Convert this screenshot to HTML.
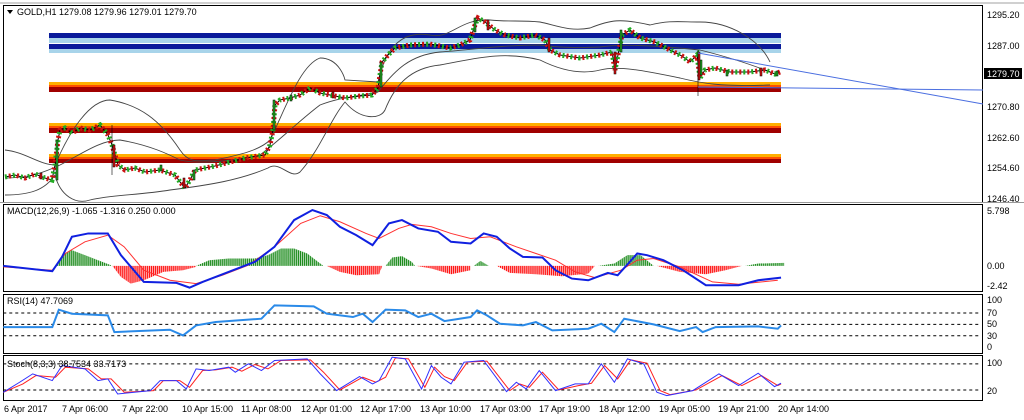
<!DOCTYPE html>
<html><head><meta charset="utf-8"><style>
html,body{margin:0;padding:0;background:#fff;width:1024px;height:420px;overflow:hidden}
svg{display:block;font-family:"Liberation Sans",sans-serif;font-size:9px}
</style></head><body>
<svg width="1024" height="420" viewBox="0 0 1024 420" xmlns="http://www.w3.org/2000/svg">
<defs>
<pattern id="gp" width="3" height="10" patternUnits="userSpaceOnUse"><rect x="0" y="0" width="2" height="10" fill="#1a8a1a"/></pattern>
<pattern id="rp" width="3" height="10" patternUnits="userSpaceOnUse"><rect x="0" y="0" width="2" height="10" fill="#ff1010"/></pattern>
</defs>
<rect width="1024" height="420" fill="#fff"/>
<line x1="0" y1="3" x2="1024" y2="3" stroke="#a0a0a0"/>
<rect x="3.5" y="5.5" width="979" height="197" fill="none" stroke="#000"/>
<rect x="3.5" y="204.5" width="979" height="87" fill="none" stroke="#000"/>
<rect x="3.5" y="294.5" width="979" height="59" fill="none" stroke="#000"/>
<rect x="3.5" y="355.5" width="979" height="45" fill="none" stroke="#000"/>
<line x1="0" y1="202.5" x2="1024" y2="202.5" stroke="#999"/>
<rect x="49" y="33" width="732" height="5" fill="#0a1a9a"/>
<rect x="49" y="38" width="732" height="5" fill="#a8d4ea"/>
<rect x="49" y="44" width="732" height="5" fill="#0a1a9a"/>
<rect x="49" y="49" width="732" height="4" fill="#a8d4ea"/>
<rect x="49" y="82" width="732" height="3" fill="#ffb000"/>
<rect x="49" y="85" width="732" height="2" fill="#ff5000"/>
<rect x="49" y="87" width="732" height="5" fill="#a00000"/>
<rect x="49" y="123" width="732" height="3" fill="#ffb000"/>
<rect x="49" y="126" width="732" height="2" fill="#ff5000"/>
<rect x="49" y="128" width="732" height="5" fill="#a00000"/>
<rect x="49" y="154" width="732" height="3" fill="#ffb000"/>
<rect x="49" y="157" width="732" height="2" fill="#ff5000"/>
<rect x="49" y="159" width="732" height="4" fill="#a00000"/>
<g fill="none" stroke="#444" stroke-width="0.9">
<path d="M5,150 C25,152 40,165 55,165 C70,130 90,100 110,100 C140,105 160,120 180,150 C190,165 200,160 215,160 C240,155 260,150 270,140 C285,110 300,65 320,58 C340,58 345,80 345,80 L378,82 C385,50 400,30 430,35 C450,40 460,18 490,20 C510,22 520,20 540,22 C555,25 570,32 590,28 C610,20 620,18 650,25 C670,20 680,22 700,22 C730,22 760,40 770,62"/>
<path d="M5,178 C30,178 45,172 60,165 C80,155 100,140 120,140 C150,145 170,155 180,160 C200,165 240,160 260,155 C280,140 300,120 320,105 C340,97 360,96 378,92 C395,70 410,55 440,52 C470,50 500,45 540,45 C560,48 580,48 600,47 C620,44 650,45 700,50 C740,60 760,68 770,72"/>
<path d="M5,195 C30,195 45,190 55,175 C60,195 75,205 90,200 C110,195 140,195 170,190 C210,185 240,180 268,168 C280,160 290,180 300,172 C320,150 330,120 345,102 C360,120 380,120 385,110 C395,85 410,68 440,65 C470,60 500,50 540,60 C560,70 580,75 600,70 C620,65 650,72 680,78 C700,83 720,87 770,85"/>
</g>
<g fill="none">
<polyline id="pp" stroke="#000" stroke-width="1" points="5,177 15,175 25,178 35,174 45,178 52,180 55,165 58,140 60,130 65,128 72,133 80,128 90,130 100,125 108,135 112,145 118,165 125,170 135,168 145,172 160,170 175,175 180,182 185,188 190,180 195,170 205,168 215,166 230,162 245,158 265,155 270,145 273,130 275,105 280,100 290,98 300,95 310,88 320,93 330,95 345,98 360,96 372,95 378,88 380,75 382,62 388,55 395,48 410,45 430,44 450,48 460,45 470,40 475,25 478,18 485,22 495,30 505,35 520,38 535,35 545,40 550,50 560,55 580,58 600,55 612,52 615,70 618,55 622,35 630,30 640,38 655,42 670,50 682,56 690,62 697,55 700,78 705,70 715,68 730,72 750,72 765,70 775,74 780,72"/>
<polyline stroke="#22aa22" stroke-width="5" stroke-dasharray="2,6" points="5,177 15,175 25,178 35,174 45,178 52,180 55,165 58,140 60,130 65,128 72,133 80,128 90,130 100,125 108,135 112,145 118,165 125,170 135,168 145,172 160,170 175,175 180,182 185,188 190,180 195,170 205,168 215,166 230,162 245,158 265,155 270,145 273,130 275,105 280,100 290,98 300,95 310,88 320,93 330,95 345,98 360,96 372,95 378,88 380,75 382,62 388,55 395,48 410,45 430,44 450,48 460,45 470,40 475,25 478,18 485,22 495,30 505,35 520,38 535,35 545,40 550,50 560,55 580,58 600,55 612,52 615,70 618,55 622,35 630,30 640,38 655,42 670,50 682,56 690,62 697,55 700,78 705,70 715,68 730,72 750,72 765,70 775,74 780,72"/>
<polyline stroke="#cc1010" stroke-width="5" stroke-dasharray="2,6" stroke-dashoffset="4" points="5,177 15,175 25,178 35,174 45,178 52,180 55,165 58,140 60,130 65,128 72,133 80,128 90,130 100,125 108,135 112,145 118,165 125,170 135,168 145,172 160,170 175,175 180,182 185,188 190,180 195,170 205,168 215,166 230,162 245,158 265,155 270,145 273,130 275,105 280,100 290,98 300,95 310,88 320,93 330,95 345,98 360,96 372,95 378,88 380,75 382,62 388,55 395,48 410,45 430,44 450,48 460,45 470,40 475,25 478,18 485,22 495,30 505,35 520,38 535,35 545,40 550,50 560,55 580,58 600,55 612,52 615,70 618,55 622,35 630,30 640,38 655,42 670,50 682,56 690,62 697,55 700,78 705,70 715,68 730,72 750,72 765,70 775,74 780,72"/>
</g>
<g fill="#22aa22" stroke="#000" stroke-width="0.5">
<rect x="56" y="140" width="2" height="40"/><rect x="273" y="100" width="2" height="30"/><rect x="380" y="62" width="2" height="25"/><rect x="474" y="18" width="2" height="14"/><rect x="620" y="30" width="2" height="22"/><rect x="700" y="60" width="2" height="15"/><rect x="726" y="70" width="2" height="6"/><rect x="776" y="71" width="2" height="5"/>
<rect x="160" y="165" width="2" height="6"/><rect x="193" y="170" width="2" height="10"/><rect x="290" y="95" width="2" height="6"/>
</g>
<g fill="#dd1010" stroke="#000" stroke-width="0.5">
<rect x="113" y="145" width="2" height="22"/><rect x="40" y="173" width="2" height="6"/><rect x="183" y="178" width="2" height="10"/><rect x="487" y="20" width="2" height="10"/><rect x="548" y="38" width="2" height="14"/><rect x="614" y="52" width="2" height="22"/><rect x="698" y="52" width="2" height="28"/><rect x="760" y="68" width="2" height="8"/><rect x="332" y="92" width="2" height="6"/>
</g>
<line x1="112" y1="125" x2="112" y2="175" stroke="#000" stroke-width="0.6"/>
<line x1="698" y1="50" x2="698" y2="96" stroke="#000" stroke-width="0.6"/>
<line x1="698" y1="53" x2="983" y2="104" stroke="#4a6ee0" stroke-width="1"/>
<line x1="698" y1="87" x2="983" y2="90" stroke="#4a6ee0" stroke-width="1"/>
<path d="M7,10 L13,10 L10,14 Z" fill="#000"/>
<text x="17" y="15">GOLD,H1  1279.08 1279.96 1279.01 1279.70</text>
<g fill="#000">
<text x="987" y="18">1295.20</text><text x="987" y="49">1287.00</text><text x="987" y="110">1270.80</text><text x="987" y="141">1262.60</text><text x="987" y="171">1254.60</text><text x="987" y="202">1246.40</text>
</g>
<rect x="984" y="68" width="38" height="11" fill="#000"/>
<text x="987" y="77" fill="#fff">1279.70</text>
<g transform="translate(0,200) scale(0.6536,0.3344)">
<polygon fill="url(#gp)" points="85,197 95,165 110,150 130,165 150,180 170,195 170,197"/>
<polygon fill="url(#rp)" points="172,197 185,230 200,250 220,240 250,215 280,210 300,200 300,197"/>
<polygon fill="url(#gp)" points="300,197 320,180 350,175 390,175 410,165 430,145 450,145 470,160 490,190 495,197"/>
<polygon fill="url(#rp)" points="500,197 520,215 545,225 580,222 585,197"/>
<polygon fill="url(#gp)" points="590,197 600,172 615,168 630,185 635,197"/>
<polygon fill="url(#rp)" points="637,197 660,205 690,222 720,210 720,197"/>
<polygon fill="url(#gp)" points="725,197 735,182 748,197"/>
<polygon fill="url(#rp)" points="760,197 780,218 820,222 860,228 900,220 910,197"/>
<polygon fill="url(#gp)" points="915,197 940,190 960,165 980,165 1000,197"/>
<polygon fill="url(#rp)" points="1005,197 1040,215 1080,222 1110,210 1135,197"/>
<polygon fill="url(#gp)" points="1140,197 1160,190 1200,188 1200,197"/>
<polyline fill="none" stroke="#ff3030" stroke-width="1" vector-effect="non-scaling-stroke" points="5,200 80,210 100,160 130,125 165,105 190,140 220,210 260,240 300,250 340,225 380,195 420,140 460,70 490,47 520,65 560,100 580,115 610,85 630,73 660,80 690,100 720,115 750,110 790,140 820,160 850,180 880,215 910,232 950,210 975,180 1000,175 1040,200 1090,245 1130,252 1190,240"/>
<polyline fill="none" stroke="#1020e0" stroke-width="2" vector-effect="non-scaling-stroke" points="5,197 80,213 95,170 110,110 135,100 165,100 185,165 220,245 270,248 290,262 310,245 390,185 420,140 450,60 478,30 500,45 520,80 545,105 570,135 595,70 615,60 640,85 670,95 690,125 720,130 740,100 760,110 780,145 800,170 830,172 850,210 875,235 900,240 930,218 945,225 975,160 990,165 1015,180 1045,210 1080,255 1130,255 1160,240 1195,232"/>
<line x1="5" y1="338" x2="1500" y2="338" stroke="#000" stroke-dasharray="3,3" vector-effect="non-scaling-stroke"/>
<line x1="5" y1="372" x2="1500" y2="372" stroke="#000" stroke-dasharray="3,3" vector-effect="non-scaling-stroke"/>
<line x1="5" y1="406" x2="1500" y2="406" stroke="#000" stroke-dasharray="3,3" vector-effect="non-scaling-stroke"/>
<polyline fill="none" stroke="#2a8ae8" stroke-width="2" vector-effect="non-scaling-stroke" points="5,380 80,380 90,328 110,340 165,345 175,395 260,388 280,405 300,375 330,365 400,355 420,315 480,318 500,340 540,350 555,340 570,365 590,328 620,330 640,350 660,340 680,362 720,350 730,330 745,345 765,370 800,375 820,365 845,390 900,385 920,370 940,395 955,355 1000,372 1040,392 1065,380 1075,395 1095,380 1160,378 1190,385 1195,375"/>
<line x1="5" y1="490" x2="1500" y2="490" stroke="#000" stroke-dasharray="3,3" vector-effect="non-scaling-stroke"/>
<line x1="5" y1="568" x2="1500" y2="568" stroke="#000" stroke-dasharray="3,3" vector-effect="non-scaling-stroke"/>
<polyline fill="none" stroke="#ff2020" stroke-width="1" vector-effect="non-scaling-stroke" points="5,575 35,550 55,525 85,530 100,500 135,505 155,535 170,535 190,575 235,570 250,540 275,540 290,560 310,510 330,508 355,500 370,512 390,492 410,505 430,480 475,478 495,515 520,568 555,530 575,545 590,530 605,472 625,475 650,560 665,500 680,528 695,540 715,485 745,482 780,570 795,550 810,560 830,515 855,568 885,555 905,548 925,495 945,535 965,478 990,488 1010,570 1025,582 1065,568 1105,525 1135,555 1165,525 1190,555 1195,550"/>
<polyline fill="none" stroke="#3030ff" stroke-width="1" vector-effect="non-scaling-stroke" points="5,575 30,545 50,520 80,540 95,495 130,505 150,540 165,535 180,580 230,570 245,540 270,540 285,565 300,505 320,510 350,500 360,515 380,490 400,510 420,480 470,475 490,520 515,570 550,528 570,550 580,540 600,470 620,475 645,565 660,495 675,530 690,550 710,485 740,480 775,573 790,545 805,565 825,510 850,570 880,550 900,550 920,490 940,545 960,475 985,490 1005,575 1020,585 1060,570 1100,520 1130,555 1160,518 1185,558 1195,548"/>
</g>
<text x="7" y="214">MACD(12,26,9) -1.065 -1.316 0.250 0.000</text>
<text x="7" y="304">RSI(14) 47.7069</text>
<text x="7" y="367">Stoch(8,3,3) 38.7534 33.7173</text>
<g>
<text x="987" y="214">5.798</text><text x="987" y="269">0.00</text><text x="987" y="289">-2.42</text>
<text x="987" y="303">100</text><text x="987" y="316">70</text><text x="987" y="327">50</text><text x="987" y="339">30</text><text x="987" y="350">0</text>
<text x="987" y="366">100</text><text x="987" y="394">20</text>
</g>
<g>
<text x="4" y="412">6 Apr 2017</text><text x="62" y="412">7 Apr 06:00</text><text x="122" y="412">7 Apr 22:00</text><text x="182" y="412">10 Apr 15:00</text><text x="241" y="412">11 Apr 08:00</text><text x="301" y="412">12 Apr 01:00</text><text x="360" y="412">12 Apr 17:00</text><text x="420" y="412">13 Apr 10:00</text><text x="480" y="412">17 Apr 03:00</text><text x="539" y="412">17 Apr 19:00</text><text x="599" y="412">18 Apr 12:00</text><text x="659" y="412">19 Apr 05:00</text><text x="718" y="412">19 Apr 21:00</text><text x="778" y="412">20 Apr 14:00</text>
</g>
</svg>
</body></html>
